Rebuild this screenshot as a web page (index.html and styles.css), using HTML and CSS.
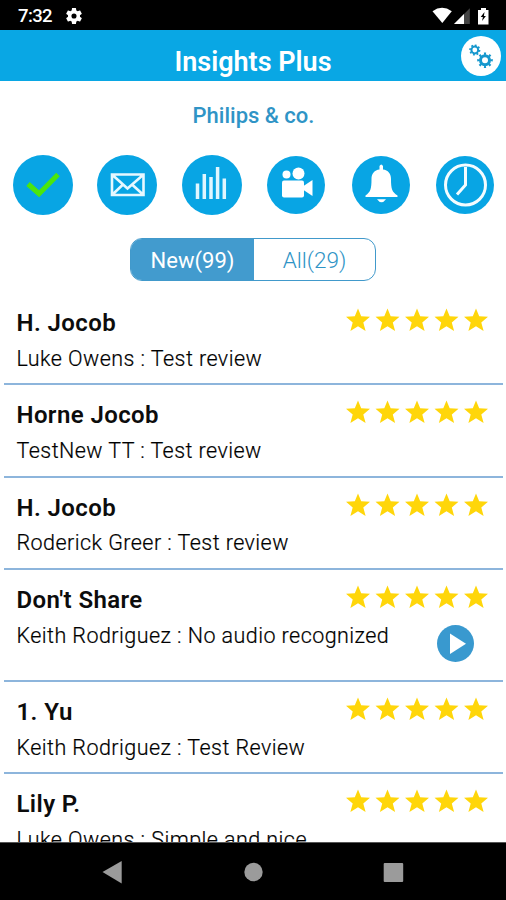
FILE: index.html
```html
<!DOCTYPE html>
<html lang="en">
<head>
<meta charset="utf-8">
<title>Insights Plus</title>
<link rel="stylesheet" href="styles.css">
</head>
<body>
<svg class="defs" aria-hidden="true">
  <symbol id="stars" viewBox="0 0 142 24">
    <g fill="#ffd60a">
      <path id="star" d="M12 .5l3.200 7.700 8.800.6-6.700 5.600 2.300 8.700L12 18.200l-7.600 4.900 2.300-8.700L0 8.800l8.800-.6z"/>
      <use href="#star" x="29.5"/><use href="#star" x="59"/><use href="#star" x="88.5"/><use href="#star" x="118"/>
    </g>
  </symbol>
</svg>
<div class="screen">
  <div class="status">
    <span class="time">7:32</span>
    <svg class="cog" width="16" height="16" viewBox="2 2 20 20"><path fill="#fff" fill-rule="evenodd" d="M19.43 12.98c.04-.32.07-.64.07-.98s-.03-.66-.07-.98l2.11-1.65c.19-.15.24-.42.12-.64l-2-3.46c-.12-.22-.39-.3-.61-.22l-2.49 1c-.52-.4-1.08-.73-1.69-.98l-.38-2.65A.49.49 0 0 0 14 2h-4c-.25 0-.46.18-.49.42l-.38 2.65c-.61.25-1.17.59-1.69.98l-2.49-1c-.23-.09-.49 0-.61.22l-2 3.46c-.13.22-.07.49.12.64l2.11 1.65c-.04.32-.07.65-.07.98s.03.66.07.98l-2.11 1.65c-.19.15-.24.42-.12.64l2 3.46c.12.22.39.3.61.22l2.49-1c.52.4 1.08.73 1.69.98l.38 2.65c.03.24.24.42.49.42h4c.25 0 .46-.18.49-.42l.38-2.65c.61-.25 1.17-.59 1.69-.98l2.49 1c.23.09.49 0 .61-.22l2-3.46c.12-.22.07-.49-.12-.64zM12 15.2a3.2 3.2 0 1 1 0-6.4 3.2 3.2 0 0 1 0 6.4z"/></svg>
    <svg class="signals" width="58" height="18" viewBox="0 0 58 18">
      <path fill="#fff" d="M.5 4.2Q10 -2.5 19.8 4.2L10.3 16z"/>
      <path fill="#444" d="M37.800 1.200v15.800H22z"/>
      <path fill="#fff" d="M32 7v10H22z"/>
      <path fill="#fff" d="M46 3h3V1h5v2h2.500v14.500H46z"/>
      <path fill="#000" d="M52.500 5l-3.800 5h2.200l-.8 4 3.800-5h-2z"/>
    </svg>
  </div>
  <header class="bar">
    <h1>Insights Plus</h1>
    <svg class="settings" width="40" height="40" viewBox="0 0 40 40">
      <circle cx="20" cy="20" r="20" fill="#fff"/>
      <g fill="none" stroke="#1597cd">
        <circle cx="13.800" cy="14" r="3.400" stroke-width="2"/>
        <circle cx="13.800" cy="14" r="4.800" stroke-width="1.600" pathLength="16" stroke-dasharray="1 1"/>
        <circle cx="24" cy="24.300" r="4.500" stroke-width="3"/>
        <circle cx="24" cy="24.300" r="6.600" stroke-width="2.400" pathLength="16" stroke-dasharray=".8 1.200" stroke-dashoffset=".4"/>
      </g>
    </svg>
  </header>
  <div class="company">Philips &amp; co.</div>
  <nav class="actions">
    <svg viewBox="0 0 60 60"><circle cx="30" cy="30" r="30"/><path d="M15 29l11 9.700L45 19.500" fill="none" stroke="#4be60c" stroke-width="5"/></svg>
    <svg viewBox="0 0 60 60"><circle cx="30" cy="30" r="30"/><path d="M15 19.500h31.500v20.500H15zM15.500 20l15 13.500L46 20M15.500 39.500l10.500-10M46 39.500L35 29.500" fill="none" stroke="#e6f8ff" stroke-width="2.600"/></svg>
    <svg viewBox="0 0 60 60"><circle cx="30" cy="30" r="30"/><path d="M15.500 28.500V44M22.300 19V44M29 22V44M35.600 12V44M42.300 23.500V44" fill="none" stroke="#e0f6ff" stroke-width="3.500"/></svg>
    <svg viewBox="0 0 60 60"><circle cx="30" cy="30" r="29"/><g fill="#fff"><circle cx="20.500" cy="19.500" r="4"/><circle cx="32.500" cy="18.500" r="6"/><rect x="16" y="25.500" width="22" height="17" rx="2"/><path d="M37.500 31l9-6v16l-9-6z"/></g></svg>
    <svg viewBox="0 0 60 60"><circle cx="30" cy="30" r="29"/><path fill="#fff" d="M28.500 13.500V11q1.700-3 3.500 0v3.500c5 .6 8 4 8 9.500 0 10 1 13 6.500 16.500V42H14.500v-1.500c5-3.500 6-6.500 6-16.500 0-5.500 3-8.900 8-9.500zM26 44.200h9q-4.500 6-9 0z"/></svg>
    <svg viewBox="0 0 60 60"><circle cx="30" cy="30" r="29"/><g fill="none" stroke="#f4fcff" stroke-width="3"><circle cx="30.500" cy="30" r="20"/><path d="M30.500 12v18l-8.500 9.500"/></g></svg>
  </nav>
  <div class="tabs"><span class="tab on">New(99)</span><span class="tab">All(29)</span></div>
  <main class="list">
    <article class="row"><div class="text"><h2>H. Jocob</h2><p>Luke Owens : Test review</p></div><svg class="rating"><use href="#stars"/></svg></article>
    <article class="row"><div class="text"><h2>Horne Jocob</h2><p>TestNew TT : Test review</p></div><svg class="rating"><use href="#stars"/></svg></article>
    <article class="row"><div class="text"><h2>H. Jocob</h2><p>Roderick Greer : Test review</p></div><svg class="rating"><use href="#stars"/></svg></article>
    <article class="row audio"><div class="text"><h2>Don't Share</h2><p>Keith Rodriguez : No audio recognized</p></div><div class="side"><svg class="rating"><use href="#stars"/></svg><svg class="play" viewBox="0 0 37 37"><circle cx="18.500" cy="18.500" r="18.500" fill="#3999cf"/><path d="M13 8.500v20.500l16-10.200z" fill="#fff"/></svg></div></article>
    <article class="row"><div class="text"><h2>1. Yu</h2><p>Keith Rodriguez : Test Review</p></div><svg class="rating"><use href="#stars"/></svg></article>
    <article class="row"><div class="text"><h2>Lily P.</h2><p>Luke Owens : Simple and nice</p></div><svg class="rating"><use href="#stars"/></svg></article>
  </main>
  <footer class="navbar">
    <svg width="506" height="58" viewBox="0 0 506 58"><g fill="#9b9b9b"><path d="M102.500 29L121.700 18v22.500z"/><circle cx="253.500" cy="29" r="9.200"/><rect x="383.700" y="20" width="19.500" height="19" rx="1"/></g></svg>
  </footer>
</div>
</body>
</html>
```
FILE: styles.css
```css
* { box-sizing: border-box; }
body { margin: 0; background: #fff; font-family: Roboto, "Liberation Sans", sans-serif; }
h1, h2, p { margin: 0; }
svg { display: block; flex: none; }
.defs { position: absolute; width: 0; height: 0; }
.screen { width: 506px; height: 900px; display: flex; flex-direction: column; overflow: hidden; }

.status { flex: none; height: 30px; background: #000; color: #fff; display: flex; align-items: center; padding: 1px 16px 0 18px; }
.time { font-size: 18.5px; font-weight: 500; letter-spacing: -.6px; width: 48px; white-space: nowrap; }
.signals { margin-left: auto; }

.bar { flex: none; height: 51px; background: #09a7e4; color: #fff; display: grid; grid-template-columns: 1fr auto 1fr; padding-right: 5px; }
.bar h1 { grid-column: 2; font-size: 27px; font-weight: 600; line-height: 30px; padding: 17px 0 0 5px; }
.settings { grid-column: 3; justify-self: end; margin-top: 6px; }

.company { flex: none; height: 74px; padding: 22px 0 0 1px; text-align: center; font-size: 22px; line-height: 26px; font-weight: 500; color: #2f94c6; }

.actions { flex: none; height: 60px; display: flex; justify-content: space-between; padding: 0 11px 0 13px; }
.actions svg { width: 60px; height: 60px; fill: #08a5e4; }

.tabs { flex: none; align-self: center; display: flex; width: 246px; height: 43px; margin-top: 23px; border: 1px solid #4199cb; border-radius: 12px; overflow: hidden; }
.tab { flex: 1; text-align: center; font-size: 22.5px; line-height: 42px; color: #2f94c6; font-weight: 300; }
.tab.on { flex: 0 0 123px; background: #429bce; color: #fff; font-size: 22px; line-height: 43px; font-weight: 400; }

.list { flex: 1; min-height: 0; overflow: hidden; padding: 12.2px 3px 0 4px; }
.row { height: 92.2px; border-bottom: 2px solid #8db5dc; display: flex; padding: 16px 15px 0 12.500px; }
.row.audio { height: 112.2px; }
.text { flex: 1; min-width: 0; }
.row h2 { font-size: 24px; letter-spacing: .4px; line-height: 28px; font-weight: 600; color: #0c0c0c; white-space: nowrap; }
.row p { font-size: 21.5px; letter-spacing: .44px; line-height: 26px; margin-top: 8.800px; font-weight: 300; color: #000; -webkit-text-stroke: .2px #000; white-space: nowrap; }
.rating { width: 142px; height: 24px; margin-top: -1px; }
.side { display: flex; flex-direction: column; align-items: flex-end; }
.play { width: 37px; height: 37px; margin: 16px 14px 0 0; }

.navbar { flex: none; height: 58.5px; background: #000; border-top: 1px solid #555; }
```
